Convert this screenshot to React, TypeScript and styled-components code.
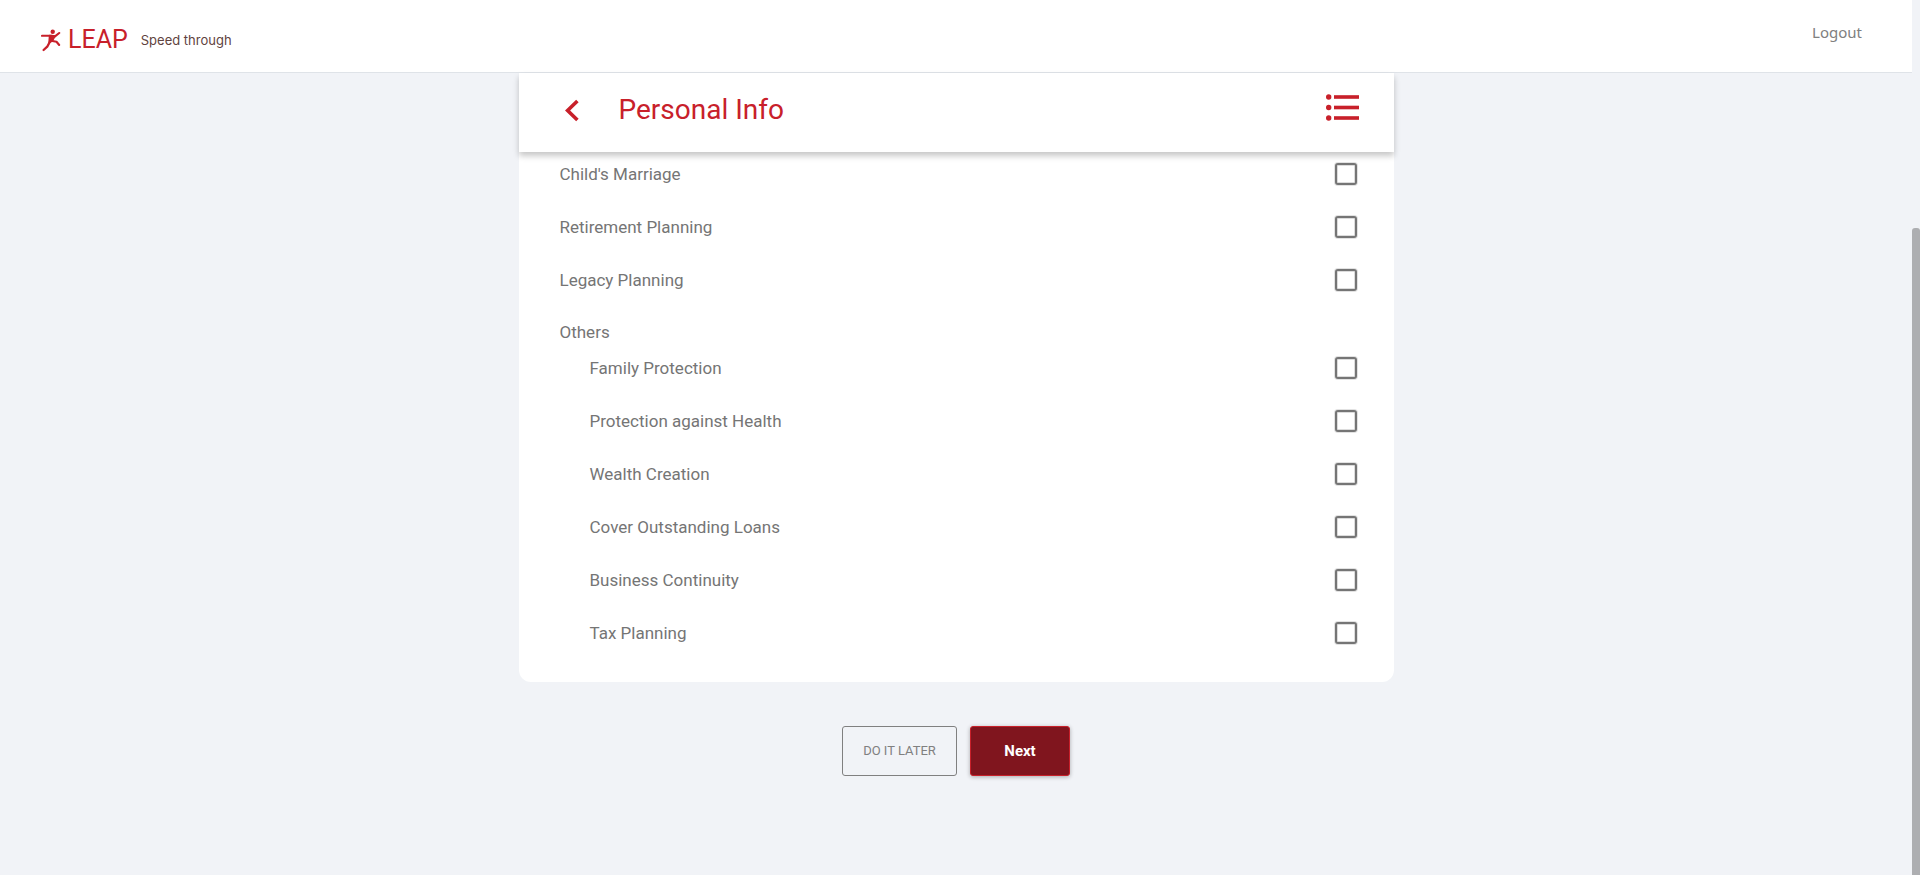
import React from "react";
import styled, { createGlobalStyle } from "styled-components";

const red = "#c8202a";
const grey = "#757575";
const paleBlue = "#f1f3f7";

const GlobalStyle = createGlobalStyle`
  *, *::before, *::after { box-sizing: border-box; }
  body {
    margin: 0;
    background: ${paleBlue};
    color: ${grey};
    font-family: Roboto, "Liberation Sans", sans-serif;
  }
`;

const Shell = styled.div`
  display: grid;
  grid-template-columns: 1fr 8px;
  min-height: 100vh;
`;

const Page = styled.div`
  display: flex;
  flex-direction: column;
`;

const Rail = styled.div`
  display: flex;
  padding-top: 26vh;
`;

const Thumb = styled.div`
  flex: 1;
  border-radius: 3px 3px 0 0;
  background: #adaeb1;
`;

const TopBar = styled.header`
  display: flex;
  justify-content: space-between;
  height: 73px;
  padding: 0 50px 0 41px;
  background: #fff;
  border-bottom: 1px solid #dfe3e8;
`;

const Brand = styled.a`
  display: flex;
  align-items: center;
  padding-top: 8px;
  color: ${red};
  text-decoration: none;
`;

const BrandName = styled.span`
  margin-left: 7px;
  font-size: 25px;
  line-height: 32px;
`;

const Tagline = styled.span`
  margin-left: 13px;
  color: #5f4340;
  font: 13px/20px Inter, sans-serif;
`;

const Logout = styled.a`
  align-self: flex-start;
  padding-top: 22px;
  color: #808080;
  font: 15px/20px "Noto Sans", sans-serif;
  text-decoration: none;
`;

const Main = styled.main`
  display: flex;
  flex-direction: column;
  width: 100%;
  max-width: 875px;
  margin: 0 auto;
`;

const Card = styled.section`
  background: #fff;
  border-radius: 0 0 12px 12px;
`;

const CardHeader = styled.div`
  display: flex;
  align-items: center;
  height: 79px;
  padding: 0 35px 5px 41px;
  background: #fff;
  box-shadow: 0 4px 6px rgba(0, 0, 0, 0.22);
`;

const IconButton = styled.button`
  display: flex;
  padding: 0;
  border: 0;
  background: none;
  color: ${red};
`;

const Title = styled.h1`
  flex: 1;
  margin: 0 0 0 35px;
  color: ${red};
  font-size: 28px;
  font-weight: 400;
  line-height: 36px;
`;

const Goals = styled.ul<{ $nested?: boolean }>`
  display: flex;
  flex-direction: column;
  gap: 29px;
  margin: 0;
  padding: ${(p) => (p.$nested ? "13px 0 0 30px" : "10px 37px 37px 41px")};
  list-style: none;
`;

const GoalRow = styled.label`
  display: flex;
  align-items: center;
  justify-content: space-between;
  height: 24px;
  font-size: 17px;
  line-height: 24px;
`;

const GroupLabel = styled.div`
  font-size: 17px;
  line-height: 22px;
`;

const Check = styled.input`
  appearance: none;
  width: 22px;
  height: 22px;
  margin: 0;
  border: 2px solid ${grey};
  border-radius: 3px;
  background: #fff;
  box-shadow: 0 0 0 1px #e2e2e2, inset 0 0 0 1px #dcdcdc;

  &:checked {
    background: ${red};
  }
`;

const Actions = styled.div`
  display: flex;
  justify-content: center;
  gap: 13px;
  padding: 44px 0;
`;

const Action = styled.button<{ $primary?: boolean }>`
  width: ${(p) => (p.$primary ? 100 : 115)}px;
  height: 50px;
  padding: 0;
  border: 1px solid ${(p) => (p.$primary ? red : "#808080")};
  border-radius: 3px;
  background: ${(p) => (p.$primary ? "#80151e" : "transparent")};
  box-shadow: ${(p) => (p.$primary ? "0 1px 4px rgba(0, 0, 0, 0.3)" : "none")};
  color: ${(p) => (p.$primary ? "#fff" : "#808080")};
  font-family: inherit;
  font-size: ${(p) => (p.$primary ? 15 : 13)}px;
  font-weight: ${(p) => (p.$primary ? 700 : 400)};
  line-height: 20px;
`;

const Runner = () => (
  <svg width="20" height="23" viewBox="0 0 20 23" fill="none" stroke="currentColor" strokeLinecap="round" strokeLinejoin="round" aria-hidden="true">
    <circle cx="11.7" cy="2.8" r="2.2" fill="currentColor" stroke="none" />
    <path d="M1 6.800H10.500L14 7.400L18.200 4" strokeWidth="2.100" />
    <path d="M8.500 6.500L14.200 6.900L11.400 12L8 13.500Z" fill="currentColor" strokeWidth="1.400" />
    <path d="M9.300 12L6.500 17.300L2.600 21" strokeWidth="2.300" />
    <path d="M10 11.800L15.500 12.800L18.200 16" strokeWidth="2.100" />
  </svg>
);

const BackIcon = () => (
  <svg width="24" height="24" viewBox="0 0 24 24" fill="none" stroke="currentColor" strokeWidth="3.600" aria-hidden="true">
    <path d="M17.400 3L7.600 12.500L17.400 22" />
  </svg>
);

const ListIcon = () => (
  <svg width="33" height="32" viewBox="0 0 33 32" fill="currentColor" aria-hidden="true">
    {[3, 13.5, 24].map((y) => (
      <g key={y}>
        <circle cx="2.700" cy={y} r="2.700" />
        <rect x="8" y={y - 1.8} width="25" height="3.600" />
      </g>
    ))}
  </svg>
);

const Goal = ({ name }: { name: string }) => (
  <li>
    <GoalRow>
      {name}
      <Check type="checkbox" />
    </GoalRow>
  </li>
);

const goals = ["Child's Marriage", "Retirement Planning", "Legacy Planning"];

const otherGoals = [
  "Family Protection",
  "Protection against Health",
  "Wealth Creation",
  "Cover Outstanding Loans",
  "Business Continuity",
  "Tax Planning",
];

export default function App() {
  return (
    <>
      <GlobalStyle />
      <Shell>
        <Page>
          <TopBar>
            <Brand href="#">
              <Runner />
              <BrandName>LEAP</BrandName>
              <Tagline>Speed through</Tagline>
            </Brand>
            <Logout href="#">Logout</Logout>
          </TopBar>
          <Main>
            <Card>
              <CardHeader>
                <IconButton type="button" aria-label="Back">
                  <BackIcon />
                </IconButton>
                <Title>Personal Info</Title>
                <IconButton type="button" aria-label="Sections">
                  <ListIcon />
                </IconButton>
              </CardHeader>
              <Goals>
                {goals.map((name) => (
                  <Goal key={name} name={name} />
                ))}
                <li>
                  <GroupLabel>Others</GroupLabel>
                  <Goals $nested>
                    {otherGoals.map((name) => (
                      <Goal key={name} name={name} />
                    ))}
                  </Goals>
                </li>
              </Goals>
            </Card>
            <Actions>
              <Action type="button">DO IT LATER</Action>
              <Action type="button" $primary>
                Next
              </Action>
            </Actions>
          </Main>
        </Page>
        <Rail aria-hidden="true">
          <Thumb />
        </Rail>
      </Shell>
    </>
  );
}
